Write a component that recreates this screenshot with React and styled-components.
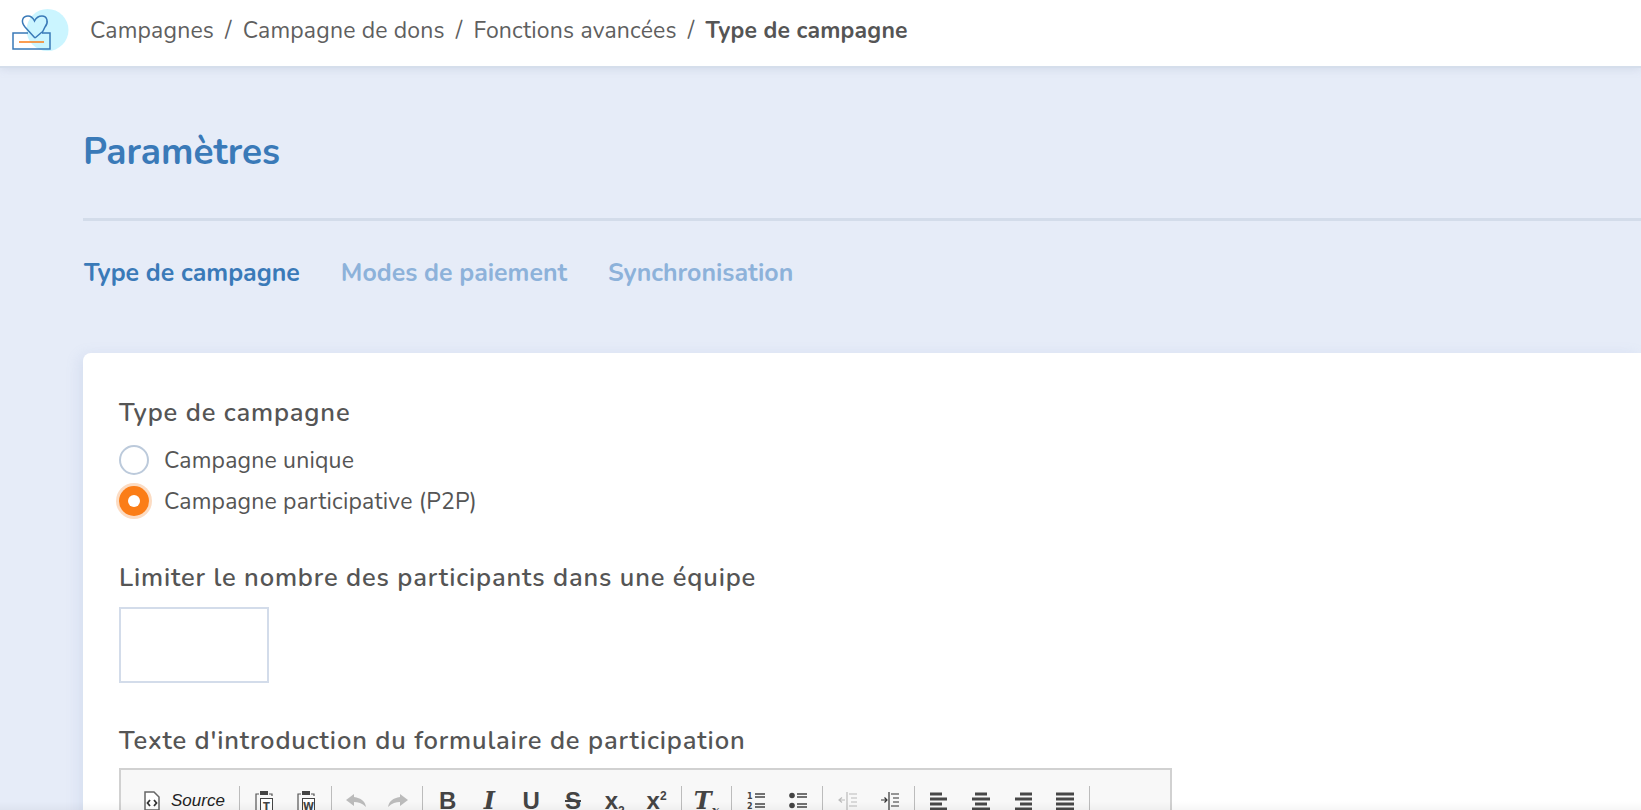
import styled, { createGlobalStyle } from 'styled-components';

const GlobalStyle = createGlobalStyle`
    html, body {
        margin: 0;
        height: 100%;
        overflow: hidden;
        background: #e6ecf8;
        font-family: "Nunito", "Lato", "Open Sans", sans-serif;
    }
`;

const Page = styled.div`
    height: 810px;
    overflow: hidden;
    position: relative;
    &::after {
        content: '';
        position: absolute;
        left: 0;
        right: 0;
        bottom: 0;
        height: 9px;
        background: linear-gradient(rgba(0, 0, 0, 0), rgba(0, 0, 0, 0.035));
    }
`;

const TopBar = styled.header`
    height: 66px;
    background: #fff;
    display: flex;
    align-items: center;
    padding-left: 12px;
    box-shadow: 0 2px 0 #d5deeb, 0 3px 8px rgba(150, 165, 190, 0.25);
    color: #5f5f5f;
`;

const Logo = styled.svg`
    width: 58px;
    height: 50px;
    flex: none;
`;

const Crumbs = styled.nav`
    margin-left: 20px;
    padding-bottom: 6px;
    display: flex;
    gap: 11px;
    font-size: 23px;
    letter-spacing: 0.18px;
`;

const CrumbCurrent = styled.strong`
    font-weight: 700;
    color: #555;
`;

const Main = styled.main`
    padding: 0 0 0 83px;
`;

const Title = styled.h1`
    margin: 0;
    padding-top: 63px;
    font-size: 37px;
    line-height: 46px;
    font-weight: 700;
    color: #3a7ab8;
`;

const Divider = styled.hr`
    border: 0;
    height: 3px;
    background: #d3dcea;
    margin: 43px 0 0;
`;

const Tabs = styled.div`
    display: flex;
    gap: 41px;
    margin-top: 37px;
    padding-left: 1px;
    font-size: 24.9px;
    line-height: 30px;
    font-weight: 700;
`;

const Tab = styled.span`
    color: ${(p) => (p.$active ? '#3a7ab8' : '#8db2da')};
`;

const Card = styled.section`
    margin-top: 65px;
    background: #fff;
    border-radius: 8px 0 0 0;
    padding: 44px 0 0 36px;
    height: 500px;
    box-shadow: -4px 2px 14px rgba(120, 150, 200, 0.15);
`;

const Label = styled.div`
    font-size: 25.5px;
    line-height: 32px;
    font-weight: 600;
    color: #555;
    letter-spacing: 0.85px;
`;

const Radios = styled.div`
    margin-top: 16px;
    display: flex;
    flex-direction: column;
    gap: 11px;
`;

const RadioRow = styled.label`
    display: flex;
    align-items: center;
    gap: 15px;
    height: 30px;
    font-size: 23px;
    letter-spacing: 0.2px;
    color: #555;
`;

const RadioDot = styled.span`
    width: 30px;
    height: 30px;
    box-sizing: border-box;
    border-radius: 50%;
    display: flex;
    align-items: center;
    justify-content: center;
    border: ${(p) => (p.$checked ? '0' : '2px solid #bccadb')};
    background: ${(p) => (p.$checked ? '#fb7d17' : '#fff')};
    box-shadow: ${(p) => (p.$checked ? '0 0 0 3px #fcdcc3' : 'none')};
    &::after {
        content: '';
        width: 12px;
        height: 12px;
        border-radius: 50%;
        background: ${(p) => (p.$checked ? '#fff' : 'transparent')};
    }
`;

const TeamLabel = styled(Label)`
    margin-top: 46px;
`;

const NumberInput = styled.input`
    display: block;
    margin-top: 13px;
    width: 150px;
    height: 76px;
    box-sizing: border-box;
    border: 2px solid #d3dcea;
    background: #fff;
    outline: none;
`;

const IntroLabel = styled(Label)`
    margin-top: 42px;
`;

const Editor = styled.div`
    margin-top: 11px;
    width: 1053px;
    box-sizing: border-box;
    border: 2px solid #d1d1d1;
    border-bottom: 0;
    background: #f8f8f8;
    height: 60px;
`;

const Toolbar = styled.div`
    display: flex;
    align-items: flex-start;
    padding: 16px 0 0 4px;
    color: #474747;
`;

const Tool = styled.span`
    width: 41.8px;
    height: 30px;
    flex: none;
    display: flex;
    align-items: center;
    justify-content: center;
    opacity: ${(p) => (p.$off ? 0.3 : 1)};
`;

const SourceTool = styled(Tool)`
    width: 110.5px;
    justify-content: flex-start;
    padding-left: 17px;
    box-sizing: border-box;
    gap: 9px;
`;

const Sep = styled.span`
    width: 1px;
    height: 40px;
    margin: 0 3.5px;
    flex: none;
    background: #bcbcbc;
`;

const SourceText = styled.span`
    font: italic 17px "Liberation Sans", sans-serif;
    color: #222;
`;

const Letter = styled.span`
    font-family: ${(p) => (p.$serif ? '"DejaVu Serif"' : '"Liberation Sans"')}, sans-serif;
    font-size: 24px;
    line-height: 28px;
    font-weight: 700;
    color: #444;
    font-style: ${(p) => (p.$italic ? 'italic' : 'normal')};
    text-decoration: ${(p) => p.$line || 'none'};
    sub, sup {
        font-size: 12px;
        line-height: 0;
    }
`;

const Icon = styled.svg`
    width: 20px;
    height: 20px;
    display: block;
`;

const PasteSvg = styled.svg`
    width: 20px;
    height: 24px;
    display: block;
    margin-top: 2px;
`;

function Bars({ kind }) {
    const rows = [3, 8, 13, 18];
    const spans = {
        left: [[1, 13], [1, 18], [1, 13], [1, 18]],
        center: [[4, 16], [1, 19], [4, 16], [1, 19]],
        right: [[7, 19], [2, 19], [7, 19], [2, 19]],
        full: [[1, 19], [1, 19], [1, 19], [1, 19]],
    }[kind];
    return (
        <Icon viewBox="0 0 20 20">
            {rows.map((y, i) => (
                <rect key={y} x={spans[i][0]} y={y - 1.5} width={spans[i][1] - spans[i][0]} height="3" fill="#474747" />
            ))}
        </Icon>
    );
}

function PasteIcon({ letter }) {
    return (
        <PasteSvg viewBox="0 0 20 24">
            <path d="M5 4H2v17h3M15 4h3v2" fill="none" stroke="#555" strokeWidth="1.2" />
            <rect x="6" y="1" width="8" height="4" fill="#444" />
            <rect x="6.5" y="8.5" width="12" height="14" fill="#fff" stroke="#444" />
            <text x="12.5" y="19.500" fontSize="10" fontWeight="700" textAnchor="middle" fill="#444" fontFamily="DejaVu Sans">{letter}</text>
        </PasteSvg>
    );
}

export default function App() {
    return (
        <Page>
            <GlobalStyle />
            <TopBar>
                <Logo viewBox="0 0 58 50">
                    <circle cx="35.500" cy="22" r="21" fill="#cbf5ff" />
                    <path d="M23 30 L13 19 C8 13 11 8 16 8 C19 8 21 10 22.500 13 C24 10 27 8 30 8 C35 8 37 14 33 19 L30 25 M23 30 L30 24" fill="none" stroke="#3a7ab8" strokeWidth="1.500" />
                    <path d="M16 25 H1 V41 H38 V25 H30" fill="none" stroke="#3a7ab8" strokeWidth="1.500" />
                    <path d="M7 34 H32" stroke="#fb7d17" strokeWidth="1.500" />
                </Logo>
                <Crumbs>
                    <span>Campagnes</span><span>/</span>
                    <span>Campagne de dons</span><span>/</span>
                    <span>Fonctions avancées</span><span>/</span>
                    <CrumbCurrent>Type de campagne</CrumbCurrent>
                </Crumbs>
            </TopBar>
            <Main>
                <Title>Paramètres</Title>
                <Divider />
                <Tabs>
                    <Tab $active>Type de campagne</Tab>
                    <Tab>Modes de paiement</Tab>
                    <Tab>Synchronisation</Tab>
                </Tabs>
                <Card>
                    <Label>Type de campagne</Label>
                    <Radios>
                        <RadioRow><RadioDot />Campagne unique</RadioRow>
                        <RadioRow><RadioDot $checked />Campagne participative (P2P)</RadioRow>
                    </Radios>
                    <TeamLabel>Limiter le nombre des participants dans une équipe</TeamLabel>
                    <NumberInput />
                    <IntroLabel>Texte d'introduction du formulaire de participation</IntroLabel>
                    <Editor>
                        <Toolbar>
                            <SourceTool>
                                <Icon viewBox="0 0 20 20">
                                    <path d="M3 1h9l5 5v13H3z" fill="#fff" stroke="#666" strokeWidth="1.500" />
                                    <path d="M8 9l-2.500 3 2.500 3M12 9l2.500 3-2.500 3" fill="none" stroke="#333" strokeWidth="1.800" />
                                </Icon>
                                <SourceText>Source</SourceText>
                            </SourceTool>
                            <Sep />
                            <Tool><PasteIcon letter="T" /></Tool>
                            <Tool><PasteIcon letter="W" /></Tool>
                            <Sep />
                            <Tool $off>
                                <Icon viewBox="0 0 20 20"><path d="M8 3L0 9l8 6v-4c4 0 8 1 12 5-1-6-5-9-12-10z" fill="#333" /></Icon>
                            </Tool>
                            <Tool $off>
                                <Icon viewBox="0 0 20 20"><path d="M12 3l8 6-8 6v-4c-4 0-8 1-12 5 1-6 5-9 12-10z" fill="#333" /></Icon>
                            </Tool>
                            <Sep />
                            <Tool><Letter>B</Letter></Tool>
                            <Tool><Letter $serif $italic>I</Letter></Tool>
                            <Tool><Letter $line="underline">U</Letter></Tool>
                            <Tool><Letter $line="line-through">S</Letter></Tool>
                            <Tool><Letter>x<sub>2</sub></Letter></Tool>
                            <Tool><Letter>x<sup>2</sup></Letter></Tool>
                            <Sep />
                            <Tool><Letter $serif $italic $line="underline">T<sub>x</sub></Letter></Tool>
                            <Sep />
                            <Tool>
                                <Icon viewBox="0 0 20 20">
                                    <path d="M9 3h10M9 6h10M9 13h10M9 16h10" stroke="#444" strokeWidth="1.600" />
                                    <text x="1" y="8" fontSize="8" fontWeight="700" fill="#444" fontFamily="DejaVu Sans">1</text>
                                    <text x="1" y="18" fontSize="8" fontWeight="700" fill="#444" fontFamily="DejaVu Sans">2</text>
                                </Icon>
                            </Tool>
                            <Tool>
                                <Icon viewBox="0 0 20 20">
                                    <path d="M9 3h10M9 6h10M9 13h10M9 16h10" stroke="#444" strokeWidth="1.600" />
                                    <circle cx="4" cy="4.500" r="2.800" fill="#444" />
                                    <circle cx="4" cy="14.500" r="2.800" fill="#444" />
                                </Icon>
                            </Tool>
                            <Sep />
                            <Tool $off>
                                <Icon viewBox="0 0 20 20">
                                    <path d="M11 3h8M13 7h6M13 11h6M11 15h8M9 1v18M1 9h6M4 6.500L1 9l3 2.500" fill="none" stroke="#333" strokeWidth="1.200" />
                                </Icon>
                            </Tool>
                            <Tool>
                                <Icon viewBox="0 0 20 20">
                                    <path d="M11 3h8M13 7h6M13 11h6M11 15h8M9 1v18M1 9h6M4.500 6.500L7 9l-2.500 2.500" fill="none" stroke="#333" strokeWidth="1.200" />
                                </Icon>
                            </Tool>
                            <Sep />
                            <Tool><Bars kind="left" /></Tool>
                            <Tool><Bars kind="center" /></Tool>
                            <Tool><Bars kind="right" /></Tool>
                            <Tool><Bars kind="full" /></Tool>
                            <Sep />
                        </Toolbar>
                    </Editor>
                </Card>
            </Main>
        </Page>
    );
}
